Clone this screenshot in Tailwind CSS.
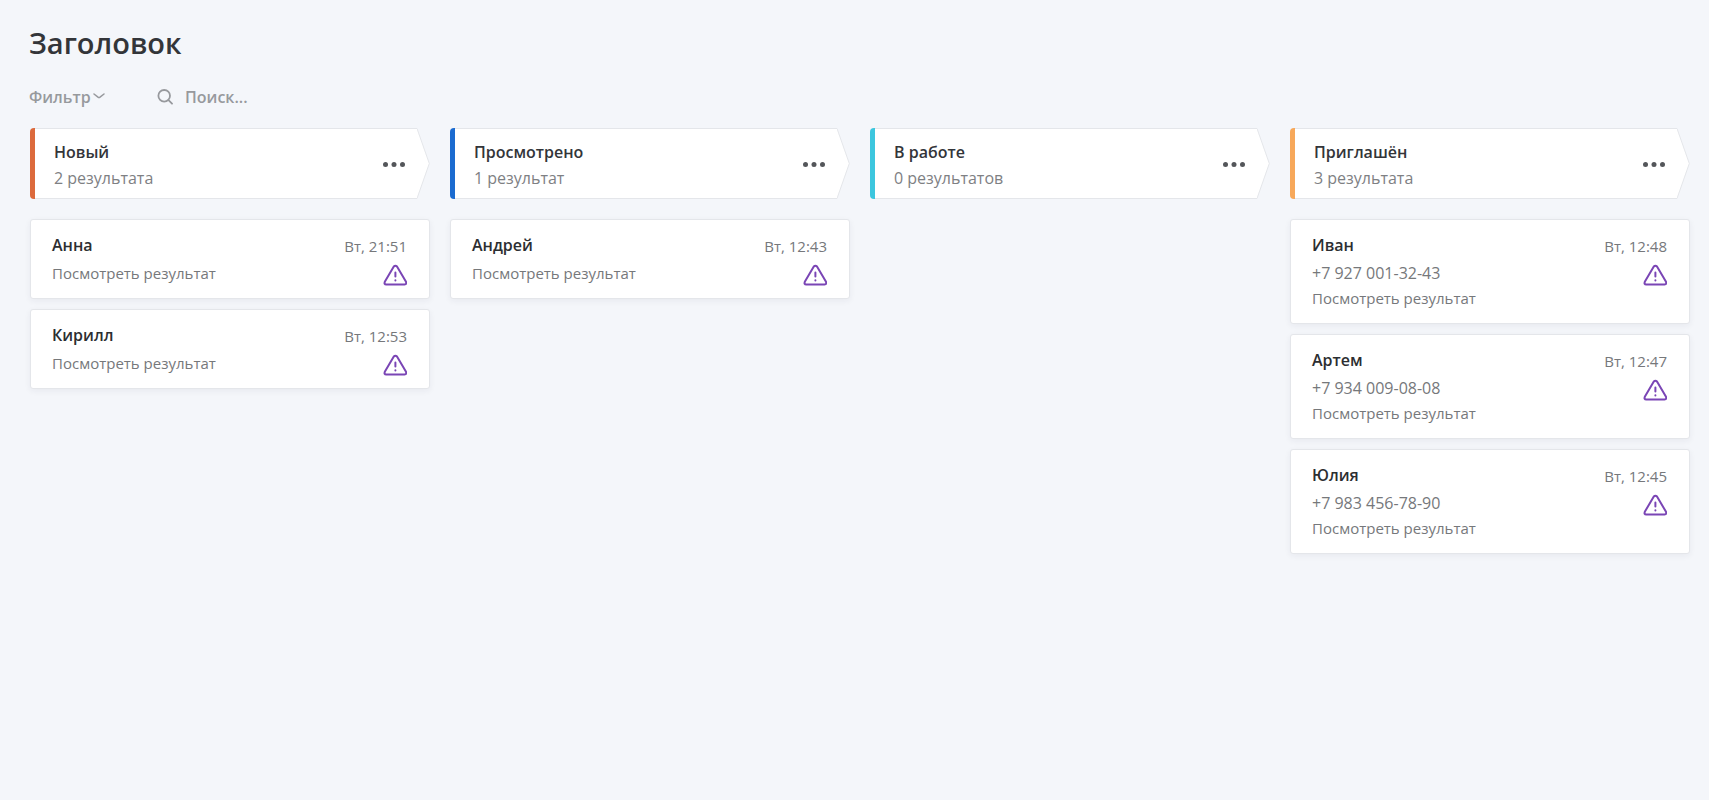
<!DOCTYPE html>
<html lang="ru">
  <head>
    <meta charset="UTF-8" />
    <meta name="viewport" content="width=device-width, initial-scale=1.0" />
    <title>Заголовок</title>
    <script src="https://cdn.jsdelivr.net/npm/@tailwindcss/browser@4"></script>
  </head>
  <body class="min-h-screen bg-[#f4f6fa] font-['Segoe_UI','Open_Sans','Noto_Sans',sans-serif] text-[#333539]">
    <main class="pt-[23px] pr-[19px] pb-8 pl-[29px]">
      <h1 class="text-[29px] leading-10 font-semibold">Заголовок</h1>

      <!-- Фильтр и поиск -->
      <div class="mt-[22px] flex h-6 items-center text-[#97999d]">
        <button type="button" class="flex w-32 items-center gap-0.5 text-base font-semibold">
          Фильтр
          <svg class="h-3 w-3" viewBox="0 0 12 12" fill="none" stroke="currentColor" stroke-width="1.5" stroke-linecap="round" stroke-linejoin="round">
            <path d="M1 3l4 3.2q1 .7 2 0l4-3.2" />
          </svg>
        </button>
        <label for="search" aria-label="Поиск">
          <svg class="h-4 w-4" viewBox="0 0 16 16" fill="none" stroke="currentColor" stroke-width="1.8" stroke-linecap="round">
            <circle cx="7.2" cy="6.8" r="5.8" />
            <path d="M11.5 11.2l3.5 3.5" />
          </svg>
        </label>
        <input id="search" type="text" placeholder="Поиск..." class="ml-3 w-60 bg-transparent text-base font-semibold outline-none placeholder:text-[#97999d]" />
      </div>

      <!-- Доска -->
      <div id="board" class="mt-[19px] ml-px grid grid-cols-4 items-start gap-5"></div>
    </main>

    <script>
      const columns = [
        {
          title: 'Новый', count: '2 результата', color: 'bg-[#dc6a3c]',
          cards: [
            { name: 'Анна', time: 'Вт, 21:51' },
            { name: 'Кирилл', time: 'Вт, 12:53' },
          ],
        },
        {
          title: 'Просмотрено', count: '1 результат', color: 'bg-[#1b6bd0]',
          cards: [{ name: 'Андрей', time: 'Вт, 12:43' }],
        },
        { title: 'В работе', count: '0 результатов', color: 'bg-[#3cc6de]', cards: [] },
        {
          title: 'Приглашён', count: '3 результата', color: 'bg-[#f7a85a]',
          cards: [
            { name: 'Иван', time: 'Вт, 12:48', phone: '+7 927 001-32-43' },
            { name: 'Артем', time: 'Вт, 12:47', phone: '+7 934 009-08-08' },
            { name: 'Юлия', time: 'Вт, 12:45', phone: '+7 983 456-78-90' },
          ],
        },
      ];

      const renderCard = (card) => `
        <article class="flex justify-between rounded-[3px] border border-[#e4e6ea] bg-white pt-[13px] pr-[22px] pb-3 pl-[21px] shadow-[0_2px_6px_rgba(40,40,60,0.06)]">
          <div>
            <h3 class="text-base font-semibold text-[#2c2e31]">${card.name}</h3>
            <div class="mt-1 text-[15px] leading-[25px] text-[#76787b]">
              ${card.phone ? `<p class="text-base leading-[25px]">${card.phone}</p>` : ''}
              <a href="#" class="block">Посмотреть результат</a>
            </div>
          </div>
          <div class="flex flex-col items-end">
            <time class="mt-px text-[15px] leading-6 text-[#76787b]">${card.time}</time>
            <svg class="mt-[6px] h-[22px] w-6" viewBox="0 0 24 22" fill="none" stroke="#7a45b5" stroke-width="2" stroke-linecap="round" stroke-linejoin="round">
              <path d="M10.8 2.5L1.8 17.8Q.8 20.5 3.2 20.5H21.6Q24 20.5 23 17.8L14 2.5Q12.4 .8 10.8 2.5Z" />
              <path d="M12.4 8.5v4M12.4 16.2v.2" />
            </svg>
          </div>
        </article>`;

      const renderColumn = (col) => `
        <section>
          <header class="flex h-[71px] items-stretch">
            <div class="w-[5px] rounded-l-[4px] ${col.color}"></div>
            <div class="flex flex-1 items-center justify-between border-y border-[#e4e6ea] bg-white pr-[11px] pl-[19px]">
              <div class="pt-0.5">
                <h2 class="text-base leading-[26px] font-semibold">${col.title}</h2>
                <p class="text-base leading-[26px] text-[#7e8083]">${col.count}</p>
              </div>
              <button type="button" aria-label="Меню" class="text-[#54565a]">
                <svg class="h-6 w-6" viewBox="0 0 24 24" fill="currentColor">
                  <circle cx="3.5" cy="12.5" r="2.5" />
                  <circle cx="12" cy="12.5" r="2.5" />
                  <circle cx="20.5" cy="12.5" r="2.5" />
                </svg>
              </button>
            </div>
            <svg class="h-full w-[13px]" viewBox="0 0 13 71" preserveAspectRatio="none" fill="white" stroke="#e4e6ea">
              <path d="M0 .5L12.3 35.5L0 70.5" />
            </svg>
          </header>
          <div class="mt-5 flex flex-col gap-[10px]">${col.cards.map(renderCard).join('')}</div>
        </section>`;

      document.querySelector('#board').innerHTML = columns.map(renderColumn).join('');
    </script>
  </body>
</html>
